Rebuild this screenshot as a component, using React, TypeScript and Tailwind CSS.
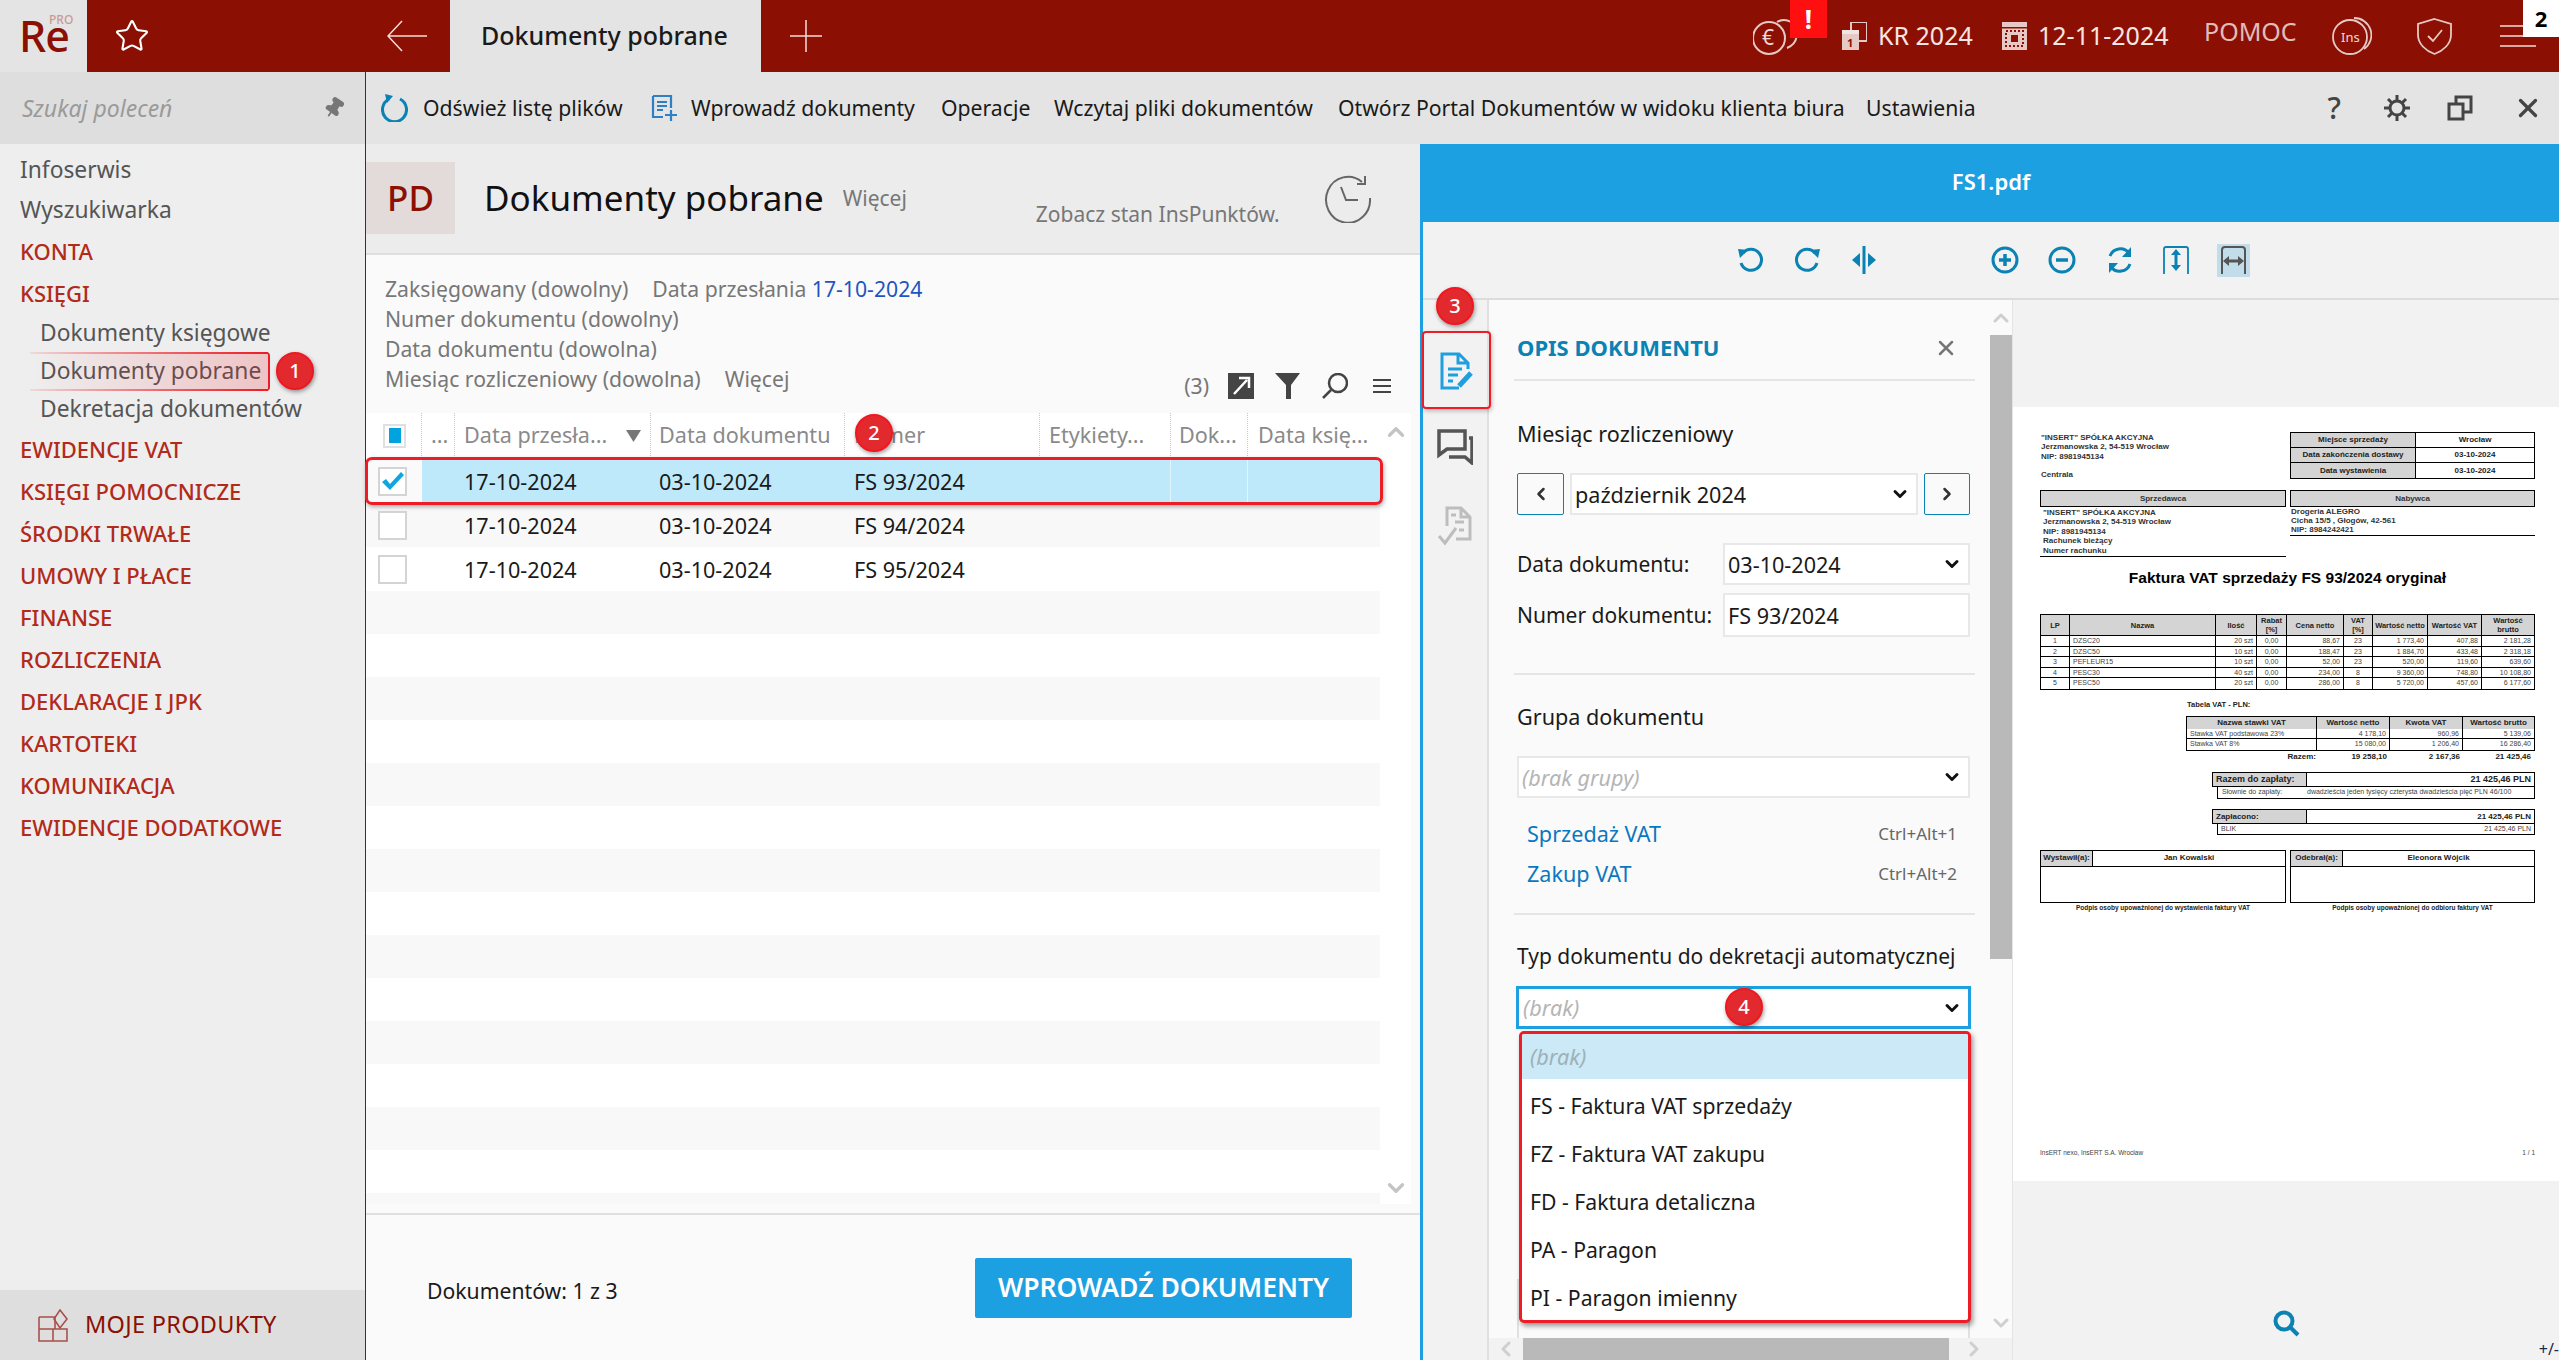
import { ChevronDown, ChevronLeft, ChevronRight, ChevronUp, Star, X, Pin } from "lucide-react";

const sections = ["EWIDENCJE VAT", "KSIĘGI POMOCNICZE", "ŚRODKI TRWAŁE", "UMOWY I PŁACE", "FINANSE", "ROZLICZENIA", "DEKLARACJE I JPK", "KARTOTEKI", "KOMUNIKACJA", "EWIDENCJE DODATKOWE"];

const docs = [
  { date: "17-10-2024", docDate: "03-10-2024", num: "FS 93/2024" },
  { date: "17-10-2024", docDate: "03-10-2024", num: "FS 94/2024" },
  { date: "17-10-2024", docDate: "03-10-2024", num: "FS 95/2024" },
];

const invoiceRows = [
  ["1", "DZSC20", "20 szt", "0,00", "88,67", "23", "1 773,40", "407,88", "2 181,28"],
  ["2", "DZSC50", "10 szt", "0,00", "188,47", "23", "1 884,70", "433,48", "2 318,18"],
  ["3", "PEFLEUR15", "10 szt", "0,00", "52,00", "23", "520,00", "119,60", "639,60"],
  ["4", "PESC30", "40 szt", "0,00", "234,00", "8", "9 360,00", "748,80", "10 108,80"],
  ["5", "PESC50", "20 szt", "0,00", "286,00", "8", "5 720,00", "457,60", "6 177,60"],
];

const options = ["FS - Faktura VAT sprzedaży", "FZ - Faktura VAT zakupu", "FD - Faktura detaliczna", "PA - Paragon", "PI - Paragon imienny"];

const gridCols = "grid grid-cols-[56px_33px_196px_194px_195px_131px_77px_132px]";
const itemCols = "grid grid-cols-[29px_146px_41px_30px_57px_29px_55px_54px_52px]";
const vatCols = "grid grid-cols-[130px_73px_73px_71px]";

function Badge({ n, className }: { n: number; className: string }) {
  return (
    <div className={`absolute w-[38px] h-[38px] rounded-full bg-[#e2292e] border-2 border-[#f01820] text-white text-[20px] font-medium flex items-center justify-center shadow-[1px_2px_4px_rgba(0,0,0,0.4)] ${className}`}>
      {n}
    </div>
  );
}

function Select({ children, className }: { children: React.ReactNode; className: string }) {
  return (
    <div className={`flex items-center justify-between bg-white border-2 border-[#e8e8e8] pl-[3px] pr-[6px] ${className}`}>
      <span className="pt-[2px]">{children}</span>
      <ChevronDown size={20} strokeWidth={3.5} className="text-[#111]" />
    </div>
  );
}

function Checkbox({ checked }: { checked?: boolean }) {
  return (
    <div className="w-[29px] h-[29px] bg-white border-2 border-[#d4d4d4] flex items-center justify-center">
      {checked && (
        <svg width="24" height="20" viewBox="0 0 24 20">
          <path d="M1 11 L5 8 L9 13 L20 1 L23 4 L9 19 Z" fill="#0ea5e0" />
        </svg>
      )}
    </div>
  );
}

function Blue({ children }: { children: React.ReactNode }) {
  return (
    <svg width="28" height="28" viewBox="0 0 28 28" fill="none" stroke="#0a82b4" strokeWidth="3">
      {children}
    </svg>
  );
}

function Invoice() {
  const gray = "bg-[#d4d4d4] flex items-center justify-center font-bold";
  return (
    <div className="bg-white w-[546px] h-[774px] pt-[25px] pl-[27px] pr-[24px] text-[8px] text-[#222] font-['Liberation_Sans',Arial,sans-serif] shrink-0">
      <div className="flex justify-between h-[47px]">
        <div className="leading-[9.3px] pt-[1px] pl-[1px] font-bold text-[#333]">
          <div>"INSERT" SPÓŁKA AKCYJNA</div>
          <div>Jerzmanowska 2, 54-519 Wrocław</div>
          <div>NIP: 8981945134</div>
          <div className="mt-[9px]">Centrala</div>
        </div>
        <div className="w-[245px] border border-black grid grid-cols-[125px_118px] grid-rows-3 font-bold">
          <div className={`${gray} border-r border-b border-black`}>Miejsce sprzedaży</div>
          <div className="flex items-center justify-center border-b border-black">Wrocław</div>
          <div className={`${gray} border-r border-b border-black`}>Data zakończenia dostawy</div>
          <div className="flex items-center justify-center border-b border-black">03-10-2024</div>
          <div className={`${gray} border-r border-black`}>Data wystawienia</div>
          <div className="flex items-center justify-center">03-10-2024</div>
        </div>
      </div>

      <div className="flex justify-between items-start mt-[11px] h-[67px] font-bold text-[#333]">
        <div className="w-[246px] h-[67px] border-b border-black">
          <div className={`${gray} h-[17px] border border-black`}>Sprzedawca</div>
          <div className="pl-[3px] pt-[1px] leading-[9.4px]">
            <div>"INSERT" SPÓŁKA AKCYJNA</div>
            <div>Jerzmanowska 2, 54-519 Wrocław</div>
            <div>NIP: 8981945134</div>
            <div>Rachunek bieżący</div>
            <div>Numer rachunku</div>
          </div>
        </div>
        <div className="w-[245px] h-[46px] border-b border-black">
          <div className={`${gray} h-[17px] border border-black`}>Nabywca</div>
          <div className="pl-[1px] leading-[9.2px]">
            <div>Drogeria ALEGRO</div>
            <div>Cicha 15/5 , Głogów, 42-561</div>
            <div>NIP: 8984242421</div>
          </div>
        </div>
      </div>

      <div className="mt-[11px] h-[20px] text-center text-[15.5px] leading-[20px] font-bold text-black whitespace-nowrap">Faktura VAT sprzedaży FS 93/2024 oryginał</div>

      <div className="mt-[26px] border border-black">
        <div className={`${itemCols} h-[21px] border-b border-black font-bold leading-[9px] text-center`}>
          {["LP", "Nazwa", "Ilość", "Rabat [%]", "Cena netto", "VAT [%]", "Wartość netto", "Wartość VAT", "Wartość brutto"].map((h, i) => (
            <div key={h} className={`${gray} ${i < 8 ? "border-r border-black" : ""} text-[7.5px] px-[1px]`}>{h}</div>
          ))}
        </div>
        {invoiceRows.map((row, r) => (
          <div key={row[0]} className={`${itemCols} h-[10.6px] text-[7px] leading-[10px] text-[#444] ${r < 4 ? "border-b border-black" : ""}`}>
            {row.map((c, i) => (
              <div key={i} className={`px-[3px] whitespace-nowrap overflow-hidden ${i < 8 ? "border-r border-black" : ""} ${i === 0 || i === 3 || i === 5 ? "text-center" : i === 1 ? "text-left" : "text-right"}`}>{c}</div>
            ))}
          </div>
        ))}
      </div>

      <div className="mt-[10px] ml-[147px] h-[10px] leading-[10px] font-bold text-[7.5px]">Tabela VAT - PLN:</div>
      <div className="mt-[6px] ml-[146px] border border-black">
        <div className={`${vatCols} h-[12px] border-b border-black`}>
          {["Nazwa stawki VAT", "Wartość netto", "Kwota VAT", "Wartość brutto"].map((h, i) => (
            <div key={h} className={`${gray} ${i < 3 ? "border-r border-black" : ""}`}>{h}</div>
          ))}
        </div>
        {[["Stawka VAT podstawowa 23%", "4 178,10", "960,96", "5 139,06"], ["Stawka VAT 8%", "15 080,00", "1 206,40", "16 286,40"]].map((row, r) => (
          <div key={row[0]} className={`${vatCols} h-[10.5px] text-[7px] leading-[10px] text-[#444] ${r === 0 ? "border-b border-black" : ""}`}>
            {row.map((c, i) => (
              <div key={i} className={`px-[3px] whitespace-nowrap ${i < 3 ? "border-r border-black" : ""} ${i > 0 ? "text-right" : ""}`}>{c}</div>
            ))}
          </div>
        ))}
      </div>
      <div className={`${vatCols} ml-[147px] h-[10px] leading-[12px] font-bold text-right`}>
        <div className="pr-[1px]">Razem:</div>
        <div className="pr-[3px]">19 258,10</div>
        <div className="pr-[3px]">2 167,36</div>
        <div className="pr-[3px]">21 425,46</div>
      </div>

      <div className="mt-[11px] ml-[172px]">
        <div className="h-[15px] border border-black flex text-[9px] font-bold">
          <div className="bg-[#d4d4d4] w-[94px] border-r border-black pl-[3px] leading-[13px]">Razem do zapłaty:</div>
          <div className="flex-1 text-right pr-[3px] leading-[13px]">21 425,46 PLN</div>
        </div>
        <div className="ml-[5px] h-[12px] border border-t-0 border-black flex text-[7px] leading-[10px] text-[#444] px-[4px]">
          <div className="w-[85px]">Słownie do zapłaty:</div>
          <div>dwadzieścia jeden tysięcy czterysta dwadzieścia pięć PLN 46/100</div>
        </div>
      </div>

      <div className="mt-[10px] ml-[172px]">
        <div className="h-[15px] border border-black flex text-[8px] font-bold">
          <div className="bg-[#d4d4d4] w-[94px] border-r border-black pl-[3px] leading-[13px]">Zapłacono:</div>
          <div className="flex-1 text-right pr-[3px] leading-[13px]">21 425,46 PLN</div>
        </div>
        <div className="ml-[5px] h-[11px] border border-t-0 border-black flex justify-between text-[7px] leading-[10px] text-[#444] px-[3px]">
          <div>BLIK</div>
          <div>21 425,46 PLN</div>
        </div>
      </div>

      <div className="mt-[15px] flex justify-between">
        {[["Wystawił(a):", "Jan Kowalski", "Podpis osoby upoważnionej do wystawienia faktury VAT", "w-[246px]"], ["Odebrał(a):", "Eleonora Wójcik", "Podpis osoby upoważnionej do odbioru faktury VAT", "w-[245px]"]].map((s) => (
          <div key={s[0]} className={s[3]}>
            <div className="h-[53px] border border-black font-bold">
              <div className="h-[16px] flex border-b border-black">
                <div className="w-[52px] bg-[#d4d4d4] border-r border-black flex items-center justify-center">{s[0]}</div>
                <div className="flex-1 flex items-center justify-center">{s[1]}</div>
              </div>
            </div>
            <div className="text-center text-[6.5px] font-bold leading-[9px]">{s[2]}</div>
          </div>
        ))}
      </div>

      <div className="mt-[236px] flex justify-between text-[6.5px] leading-[10px] text-[#444]">
        <div>InsERT nexo, InsERT S.A. Wrocław</div>
        <div>1 / 1</div>
      </div>
    </div>
  );
}

export default function App() {
  return (
    <div className="relative w-[2559px] h-[1360px] overflow-hidden flex flex-col bg-[#fafafa] text-[21.6px] text-[#1a1a1a] font-['Noto_Sans','Open_Sans',sans-serif]">
      {/* top bar */}
      <header className="h-[72px] flex bg-[#8b1003] shrink-0 text-white">
        <div className="relative w-[87px] bg-[#e4e4e4]">
          <span className="absolute left-[19px] top-[8px] text-[43px] leading-[56px] font-medium text-[#8b1003] tracking-[-1px]">Re</span>
          <span className="absolute left-[49px] top-[13px] text-[12px] leading-[14px] font-medium text-[#c99a95]">PRO</span>
        </div>
        <div className="w-[363px] flex items-center justify-between pl-[27px] pr-[23px]">
          <Star size={36} strokeWidth={1.4} />
          <svg width="40" height="32" viewBox="0 0 40 32" fill="none" stroke="#f3dcd8" strokeWidth="1.5"><path d="M15 1 L1 16 L15 31 M1 16 H40" /></svg>
        </div>
        <div className="w-[311px] bg-[#e4e4e4] flex items-center pl-[31px] text-[25px] font-medium text-[#1a1a1a] whitespace-nowrap">Dokumenty pobrane</div>
        <div className="ml-[29px] flex items-center">
          <svg width="32" height="32" viewBox="0 0 32 32" stroke="#f3dcd8" strokeWidth="1.5"><path d="M16 0 V32 M0 16 H32" /></svg>
        </div>
        <div className="flex-1" />
        <div className="flex items-center pr-[23px] text-[#f6e6e3]">
          <div className="relative w-[52px] h-[72px]">
            <svg width="52" height="42" viewBox="0 0 52 42" fill="none" stroke="#e6c9c5" strokeWidth="2" className="absolute top-[14px] left-0">
              <circle cx="16" cy="24" r="16" />
              <path d="M24 8 A14 14 0 0 1 38 8 A15 15 0 0 1 34 34" />
              <text x="9" y="31" fontSize="21" fill="#f0dad7" stroke="none">€</text>
            </svg>
            <div className="absolute left-[37px] top-0 w-[37px] h-[38px] bg-[#ff0f0f] flex items-center justify-center text-white text-[26px] font-bold">!</div>
          </div>
          <svg width="25" height="28" viewBox="0 0 25 28" className="ml-[37px]">
            <rect x="9" y="0" width="16" height="19" fill="none" stroke="#e6c9c5" strokeWidth="2" />
            <rect x="0" y="8" width="17" height="20" fill="#e6c9c5" />
            <rect x="0" y="8" width="17" height="4" fill="#f3e4e2" />
            <text x="5" y="25" fontSize="11" fontWeight="700" fill="#8b1003">1</text>
          </svg>
          <span className="ml-[11px] w-[94px] whitespace-nowrap text-[25px]">KR 2024</span>
          <svg width="25" height="28" viewBox="0 0 25 28" className="ml-[30px]">
            <rect width="25" height="28" fill="#e6c9c5" />
            <rect x="0" y="5" width="25" height="1.5" fill="#8b1003" />
            <rect x="4" y="9" width="17" height="15" fill="none" stroke="#8b1003" strokeDasharray="2 2" strokeWidth="2" />
            <rect x="9" y="13" width="7" height="7" fill="#8b1003" />
          </svg>
          <span className="ml-[11px] w-[133px] whitespace-nowrap text-[25px]">12-11-2024</span>
          <span className="ml-[33px] w-[93px] whitespace-nowrap text-[25px] text-[#e0bdb8] -mt-[8px]">POMOC</span>
          <svg width="40" height="40" viewBox="0 0 40 40" fill="none" stroke="#e6c9c5" strokeWidth="1.8" className="ml-[35px]">
            <circle cx="18" cy="21" r="17" />
            <path d="M22 2 A17 17 0 0 1 32 33" />
            <text x="9" y="26" fontSize="13" fill="#f0dad7" stroke="none">Ins</text>
          </svg>
          <svg width="35" height="37" viewBox="0 0 35 37" fill="none" stroke="#e6c9c5" strokeWidth="1.8" className="ml-[45px]">
            <path d="M17.5 1 L34 6 V17 C34 26 26 33 17.5 36 C9 33 1 26 1 17 V6 Z" />
            <path d="M11 18 L16 23 L25 12" />
          </svg>
          <div className="ml-[48px] w-[36px] flex flex-col gap-[8px]">
            <div className="h-[2px] bg-[#d8a8a2]" />
            <div className="h-[2px] bg-[#d8a8a2]" />
            <div className="h-[2px] bg-[#d8a8a2]" />
          </div>
        </div>
      </header>

      <div className="flex flex-1 min-h-0">
        {/* sidebar */}
        <aside className="w-[366px] shrink-0 flex flex-col bg-[#eeeeee] border-r border-[#8b1003]">
          <div className="h-[72px] shrink-0 bg-[#dedede] flex items-center justify-between pl-[22px] pr-[20px]">
            <span className="italic text-[23px] text-[#9a9a9a]">Szukaj poleceń</span>
            <Pin size={22} className="text-[#777] fill-[#777] rotate-[35deg]" />
          </div>
          <nav className="flex-1 pt-[6px] pl-[20px] text-[22.8px] text-[#555]">
            <div className="h-[40px] flex items-center">Infoserwis</div>
            <div className="h-[40px] flex items-center">Wyszukiwarka</div>
            <div className="h-[42px] flex items-center text-[#b22a1a] font-medium text-[22px]">KONTA</div>
            <div className="h-[42px] flex items-center text-[#b22a1a] font-medium text-[22px]">KSIĘGI</div>
            <div className="pl-[20px]">
              <div className="h-[38px] flex items-center">Dokumenty księgowe</div>
              <div className="h-[38px] flex items-center">Dokumenty pobrane</div>
              <div className="h-[38px] flex items-center">Dekretacja dokumentów</div>
            </div>
            {sections.map((s) => (
              <div key={s} className="h-[42px] flex items-center text-[#b22a1a] font-medium text-[22px]">{s}</div>
            ))}
          </nav>
          <div className="h-[70px] bg-[#dedede] flex items-center pl-[38px] gap-[17px] text-[#8b1003] text-[23.5px] tracking-[0.3px]">
            <svg width="30" height="33" viewBox="0 0 30 33" fill="none" stroke="#a9504a" strokeWidth="1.6">
              <path d="M1 8 H17 M1 8 V32 H29 V20 H1 M15 20 V32 M17 8 V20" />
              <path d="M22 1 L29 10 L22 19 L16 10 Z" />
            </svg>
            MOJE PRODUKTY
          </div>
        </aside>

        <div className="flex-1 flex flex-col min-w-0">
          {/* toolbar */}
          <div className="h-[72px] shrink-0 bg-[#e4e4e4] flex items-center pl-[15px] text-[21.2px]">
            <svg width="27" height="28" viewBox="0 0 27 28" fill="none" stroke="#0a82b4" strokeWidth="3">
              <path d="M8 5 A12 12 0 1 0 19 5" />
              <path d="M4 0 L12 2 L6 9 Z" fill="#0a82b4" stroke="none" />
            </svg>
            <span className="ml-[15px] w-[200px] whitespace-nowrap">Odśwież listę plików</span>
            <svg width="27" height="28" viewBox="0 0 27 28" fill="none" stroke="#2f7fc4" strokeWidth="2.2" className="ml-[27px]">
              <path d="M3 2 H21 V14 M13 23 H3 V2 M7 8 H17 M7 12 H17 M7 16 H13 M21 16 V27 M15 21 H27" />
            </svg>
            <span className="ml-[14px] w-[227px] whitespace-nowrap">Wprowadź dokumenty</span>
            <span className="ml-[23px] w-[90px] whitespace-nowrap">Operacje</span>
            <span className="ml-[23px] w-[261px] whitespace-nowrap">Wczytaj pliki dokumentów</span>
            <span className="ml-[23px] w-[504px] whitespace-nowrap">Otwórz Portal Dokumentów w widoku klienta biura</span>
            <span className="ml-[24px] w-[105px] whitespace-nowrap">Ustawienia</span>
            <div className="flex-1" />
            <div className="flex items-center pr-[16px] text-[#444]">
              <span className="text-[30px] font-medium leading-none">?</span>
              <svg width="28" height="28" viewBox="0 0 28 28" fill="none" stroke="#444" strokeWidth="3" className="ml-[42px]">
                <circle cx="14" cy="14" r="7" />
                <path d="M14 1 V6 M14 22 V27 M1 14 H6 M22 14 H27 M5 5 L9 9 M19 19 L23 23 M23 5 L19 9 M9 19 L5 23" />
              </svg>
              <svg width="26" height="26" viewBox="0 0 26 26" fill="none" stroke="#444" strokeWidth="3" className="ml-[36px]">
                <rect x="2" y="9" width="14" height="15" />
                <path d="M9 9 V2 H24 V17 H16" />
              </svg>
              <X size={30} strokeWidth={2.6} className="ml-[40px]" />
            </div>
          </div>

          <div className="flex flex-1 min-h-0">
            {/* document list */}
            <section className="w-[1054px] shrink-0 flex flex-col">
              <div className="h-[111px] shrink-0 bg-[#ececec] border-b-2 border-[#dedede] flex pt-[18px]">
                <div className="w-[89px] h-[72px] bg-[#e3dada] flex items-center justify-center text-[#8b1003] text-[35px] font-medium">PD</div>
                <div className="ml-[29px] h-[72px] flex items-center text-[35px] text-[#111] whitespace-nowrap">Dokumenty pobrane</div>
                <div className="ml-[19px] h-[72px] flex items-center text-[#777] text-[21px] pt-[2px]">Więcej</div>
                <div className="ml-[129px] h-[72px] flex items-end text-[#777] text-[21px] pb-[4px] whitespace-nowrap">Zobacz stan InsPunktów.</div>
                <svg width="48" height="50" viewBox="0 0 48 50" fill="none" stroke="#666" strokeWidth="2" className="ml-[44px] mt-[11px]">
                  <path d="M38 9 A22 23 0 1 0 46 25" />
                  <path d="M41 3 V11 H33" />
                  <path d="M17 14 L22 27 L34 27" />
                </svg>
              </div>

              <div className="h-[158px] shrink-0 pt-[19px] pl-[19px] text-[#777] text-[21.2px] leading-[30px]">
                <div className="whitespace-nowrap">Zaksięgowany (dowolny)<span className="ml-[24px]">Data przesłania</span> <span className="text-[#1f55c0]">17-10-2024</span></div>
                <div>Numer dokumentu (dowolny)</div>
                <div>Data dokumentu (dowolna)</div>
                <div className="flex items-start">
                  <span>Miesiąc rozliczeniowy (dowolna)</span>
                  <span className="ml-[24px]">Więcej</span>
                  <div className="flex-1" />
                  <div className="flex items-center mt-[7px] pr-[29px]">
                    <span>(3)</span>
                    <svg width="26" height="26" viewBox="0 0 26 26" className="ml-[19px]">
                      <rect width="26" height="26" fill="#444" />
                      <path d="M6 21 L19 7 M11 5 H21 V15" fill="none" stroke="#fff" strokeWidth="2.5" />
                    </svg>
                    <svg width="25" height="26" viewBox="0 0 25 26" className="ml-[21px]"><path d="M0 0 H25 L16 12 V26 H11 V12 Z" fill="#444" /></svg>
                    <svg width="26" height="26" viewBox="0 0 26 26" fill="none" stroke="#444" strokeWidth="2.5" className="ml-[22px]">
                      <circle cx="16" cy="10" r="9" />
                      <path d="M9 17 L1 25" />
                    </svg>
                    <div className="ml-[25px] w-[18px] flex flex-col gap-[4px]">
                      <div className="h-[2px] bg-[#444]" />
                      <div className="h-[2px] bg-[#444]" />
                      <div className="h-[2px] bg-[#444]" />
                    </div>
                  </div>
                </div>
              </div>

              <div className="h-[791px] shrink-0 flex w-[1045px] bg-white">
                <div className="w-[1014px] flex flex-col text-[#1a1a1a]">
                  <div className={`${gridCols} h-[46px] shrink-0 text-[#8a8a8a] items-center border-b border-[#eeeeee]`}>
                    <div className="h-full flex items-center pl-[17px] border-r border-dotted border-[#c8c8c8]">
                      <div className="w-[23px] h-[24px] border-2 border-[#e0e0e0] flex items-center justify-center"><div className="w-[12px] h-[15px] bg-[#00a2e0]" /></div>
                    </div>
                    <div className="h-full flex items-center pl-[9px] border-r border-dotted border-[#c8c8c8]">...</div>
                    <div className="h-full flex items-center pl-[9px] justify-between pr-[9px] border-r border-dotted border-[#c8c8c8] whitespace-nowrap">
                      Data przesła...
                      <svg width="15" height="12" viewBox="0 0 15 12"><path d="M0 0 H15 L7.5 12 Z" fill="#777" /></svg>
                    </div>
                    <div className="h-full flex items-center pl-[8px] border-r border-dotted border-[#c8c8c8] whitespace-nowrap">Data dokumentu</div>
                    <div className="h-full flex items-center pl-[9px] border-r border-dotted border-[#c8c8c8]">Numer</div>
                    <div className="h-full flex items-center pl-[9px] border-r border-dotted border-[#c8c8c8]">Etykiety...</div>
                    <div className="h-full flex items-center pl-[8px] border-r border-dotted border-[#c8c8c8]">Dok...</div>
                    <div className="h-full flex items-center pl-[10px] whitespace-nowrap">Data księ...</div>
                  </div>
                  {docs.map((d, i) => (
                    <div key={d.num} className={`${gridCols} h-[44px] shrink-0 items-center ${i === 0 ? "bg-[#bde9fb]" : i === 1 ? "bg-[#f8f8f8]" : "bg-white"}`}>
                      <div className={`h-full flex items-center pl-[12px] ${i === 0 ? "bg-[#fafafa]" : ""}`}><Checkbox checked={i === 0} /></div>
                      <div />
                      <div className="pl-[9px] pt-[3px]">{d.date}</div>
                      <div className="pl-[8px] pt-[3px]">{d.docDate}</div>
                      <div className="pl-[9px] pt-[3px]">{d.num}</div>
                      <div className={`h-full ${i === 0 ? "border-r border-[#e0f5fd]" : ""}`} />
                      <div className={`h-full ${i === 0 ? "border-r border-[#e0f5fd]" : ""}`} />
                      <div />
                    </div>
                  ))}
                  {Array.from({ length: 14 }).map((_, i) => (
                    <div key={i} className={`h-[43px] shrink-0 ${i % 2 === 0 ? "bg-[#f8f8f8]" : "bg-white"}`} />
                  ))}
                  <div className="h-[11px] shrink-0 bg-[#f8f8f8]" />
                </div>
                <div className="flex-1 flex flex-col items-center justify-between pt-[6px] pb-[3px] text-[#c4c4c4]">
                  <ChevronUp size={26} strokeWidth={3} />
                  <ChevronDown size={26} strokeWidth={3} />
                </div>
              </div>

              <div className="flex-1 border-t-2 border-[#e0e0e0] mt-[9px] flex items-center justify-between pl-[61px] pr-[68px]">
                <span className="mt-[6px] text-[21.2px]">Dokumentów: 1 z 3</span>
                <div className="w-[377px] h-[60px] rounded-[2px] bg-[#1ca0e2] text-white text-[26.5px] font-semibold flex items-center justify-center whitespace-nowrap">WPROWADŹ DOKUMENTY</div>
              </div>
            </section>

            {/* preview */}
            <section className="flex-1 flex flex-col border-l-[3px] border-[#1ca0e2] min-w-0">
              <div className="h-[78px] shrink-0 bg-[#1ca0e2] text-white text-[22px] font-semibold flex items-center justify-center pb-[4px]">FS1.pdf</div>
              <div className="h-[78px] shrink-0 bg-[#f2f2f2] border-b-2 border-[#dcdcdc] flex items-center pl-[313px]">
                <Blue><path d="M7 7 A10.5 10.5 0 1 1 5 17" /><path d="M2 3 L12 4 L4 12 Z" fill="#0a82b4" stroke="none" /></Blue>
                <div className="ml-[30px]"><Blue><path d="M21 7 A10.5 10.5 0 1 0 23 17" /><path d="M26 3 L16 4 L24 12 Z" fill="#0a82b4" stroke="none" /></Blue></div>
                <div className="ml-[28px]"><Blue><path d="M14 0 V28" strokeWidth="3" /><path d="M10 7 L2 14 L10 21 Z M18 7 L26 14 L18 21 Z" fill="#0a82b4" stroke="none" /></Blue></div>
                <div className="ml-[113px]"><Blue><circle cx="14" cy="14" r="12" /><path d="M14 8 V20 M8 14 H20" strokeWidth="3.5" /></Blue></div>
                <div className="ml-[29px]"><Blue><circle cx="14" cy="14" r="12" /><path d="M8 14 H20" strokeWidth="3.5" /></Blue></div>
                <div className="ml-[30px]"><Blue><path d="M4 10 A11 11 0 0 1 23 7 M24 18 A11 11 0 0 1 5 21" /><path d="M25 1 V11 H16 Z M3 27 V17 H12 Z" fill="#0a82b4" stroke="none" /></Blue></div>
                <div className="ml-[28px]"><Blue><path d="M2 28 V3 Q2 1 4 1 H24 Q26 1 26 3 V28" strokeWidth="1.8" /><path d="M14 7 V21" strokeWidth="3" /><path d="M9 9 L14 3 L19 9 Z M9 19 L14 25 L19 19 Z" fill="#0a82b4" stroke="none" /></Blue></div>
                <div className="ml-[27px] w-[33px] h-[33px] bg-[#c2dde9] flex items-center justify-center">
                  <svg width="27" height="28" viewBox="0 0 27 28" fill="none" stroke="#555" strokeWidth="2"><path d="M2 28 V4 Q2 1 5 1 H22 Q25 1 25 4 V28" /><path d="M8 15 H20" strokeWidth="3" /><path d="M9 10 L3 15 L9 20 Z M18 10 L24 15 L18 20 Z" fill="#555" stroke="none" /></svg>
                </div>
              </div>

              <div className="flex flex-1 min-h-0">
                <div className="w-[66px] shrink-0 bg-[#f2f2f2] border-r-2 border-[#e0e0e0] flex flex-col items-center">
                  <svg width="34" height="38" viewBox="0 0 34 38" fill="none" stroke="#1f9fe0" strokeWidth="3" className="mt-[52px] ml-[3px]">
                    <path d="M19 36 H2 V2 H19 L28 11 V17 M18 2 V11 H28" />
                    <path d="M8 17 H22 M8 23 H18 M8 29 H13" />
                    <path d="M19 34 L31 21" strokeWidth="5" />
                  </svg>
                  <svg width="36" height="36" viewBox="0 0 36 36" fill="none" stroke="#555" strokeWidth="3.5" className="mt-[39px]">
                    <path d="M2 2 H28 V20 H10 L2 26 Z" />
                    <path d="M32 9 H35 V34 L28 28 H12" />
                  </svg>
                  <svg width="36" height="40" viewBox="0 0 36 40" fill="none" stroke="#bdbdbd" strokeWidth="3" className="mt-[41px]">
                    <path d="M10 20 V2 H24 L33 11 V33 H19 M24 2 V11 H33" />
                    <path d="M14 9 H19 M18 16 H27 M22 24 H27" />
                    <path d="M2 30 L8 37 L19 22" />
                  </svg>
                </div>

                <div className="w-[523px] shrink-0 flex flex-col">
                  <div className="flex-1 flex min-h-0">
                    <div className="w-[501px] pl-[25px] text-[#1a1a1a] overflow-hidden">
                      <div className="w-[461px] h-[81px] border-b-2 border-[#e5e5e5] pt-[16px] pl-[3px] pr-[17px] flex items-center justify-between">
                        <span className="text-[#0a82b4] font-bold text-[22px] whitespace-nowrap">OPIS DOKUMENTU</span>
                        <X size={24} strokeWidth={2.5} className="text-[#777]" />
                      </div>
                      <div className="w-[461px] h-[294px] border-b-2 border-[#e5e5e5] pt-[38px] pl-[3px] pr-[5px]">
                        <div className="h-[30px] flex items-center">Miesiąc rozliczeniowy</div>
                        <div className="mt-[24px] h-[42px] flex gap-[6px]">
                          <div className="w-[47px] border border-[#0a82b4] rounded-[2px] flex items-center justify-center"><ChevronLeft size={20} strokeWidth={3} className="text-[#333]" /></div>
                          <Select className="flex-1">październik 2024</Select>
                          <div className="w-[46px] border border-[#0a82b4] rounded-[2px] flex items-center justify-center"><ChevronRight size={20} strokeWidth={3} className="text-[#333]" /></div>
                        </div>
                        <div className="mt-[28px] h-[42px] flex items-center justify-between">
                          <span className="text-[21px] pt-[2px]">Data dokumentu:</span>
                          <Select className="w-[247px] h-[42px]">03-10-2024</Select>
                        </div>
                        <div className="mt-[8px] h-[44px] flex items-center justify-between">
                          <span className="text-[21px] pt-[2px]">Numer dokumentu:</span>
                          <div className="w-[247px] h-[44px] bg-white border-2 border-[#e8e8e8] pl-[3px] pt-[2px] flex items-center">FS 93/2024</div>
                        </div>
                      </div>
                      <div className="w-[461px] h-[240px] border-b-2 border-[#e5e5e5] pt-[27px] pl-[3px] pr-[5px]">
                        <div className="h-[30px] flex items-center">Grupa dokumentu</div>
                        <Select className="mt-[24px] h-[42px] text-[#b5b5b5] italic">(brak grupy)</Select>
                        <div className="mt-[21px] h-[30px] pl-[10px] pr-[13px] flex items-center justify-between text-[#0a78c0]">
                          Sprzedaż VAT
                          <span className="text-[17px] text-[#666]">Ctrl+Alt+1</span>
                        </div>
                        <div className="mt-[10px] h-[30px] pl-[10px] pr-[13px] flex items-center justify-between text-[#0a78c0]">
                          Zakup VAT
                          <span className="text-[17px] text-[#666]">Ctrl+Alt+2</span>
                        </div>
                      </div>
                      <div className="w-[461px] pt-[27px] pl-[3px] pr-[5px]">
                        <div className="h-[30px] flex items-center whitespace-nowrap text-[21px]">Typ dokumentu do dekretacji automatycznej</div>
                        <div className="mt-[14px] h-[43px] -mx-[1px] bg-white border-[3px] border-[#1ca0e2] pl-[4px] pr-[6px] flex items-center justify-between text-[#b5b5b5] italic">
                          <span className="pt-[2px]">(brak)</span>
                          <ChevronDown size={20} strokeWidth={3.5} className="text-[#111]" />
                        </div>
                        <div className="mt-[250px] h-[60px] border-x-2 border-[#e0e0e0]" />
                      </div>
                    </div>
                    <div className="w-[22px] flex flex-col items-center bg-[#fafafa] relative">
                      <div className="h-[35px] flex items-center"><ChevronUp size={24} strokeWidth={3} className="text-[#cfcfcf]" /></div>
                      <div className="w-full h-[624px] bg-[#b9b9b9]" />
                      <div className="flex-1" />
                      <div className="h-[30px] flex items-center"><ChevronDown size={24} strokeWidth={3} className="text-[#cfcfcf]" /></div>
                    </div>
                  </div>
                  <div className="h-[22px] shrink-0 flex items-center bg-[#f2f2f2]">
                    <ChevronLeft size={24} strokeWidth={3} className="text-[#cfcfcf] ml-[5px]" />
                    <div className="ml-[5px] w-[426px] h-full bg-[#b9b9b9]" />
                    <ChevronRight size={24} strokeWidth={3} className="text-[#cfcfcf] ml-[13px]" />
                  </div>
                </div>

                <div className="flex-1 bg-[#f2f2f2] border-l border-[#e4e4e4] flex flex-col items-center pt-[107px] min-w-0">
                  <Invoice />
                  <svg width="27" height="27" viewBox="0 0 27 27" fill="none" stroke="#0a82b4" strokeWidth="4" className="mt-[129px]">
                    <circle cx="11" cy="11" r="8.5" />
                    <path d="M17 17 L25 25" />
                  </svg>
                  <span className="self-end mt-[2px] text-[16px] leading-[20px] text-[#1a2a4a] whitespace-nowrap">+/-</span>
                </div>
              </div>
            </section>
          </div>
        </div>
      </div>

      {/* callouts */}
      <div className="absolute left-[30px] top-[352px] w-[240px] h-[39px] rounded-r-[4px] border-r-2 border-[#ee1c25] bg-linear-to-r from-transparent to-[#ee1c25]/20">
        <div className="absolute left-0 right-0 top-0 h-[2px] bg-linear-to-r from-[#ee1c25]/10 to-[#ee1c25]" />
        <div className="absolute left-0 right-0 bottom-0 h-[2px] bg-linear-to-r from-[#ee1c25]/10 to-[#ee1c25]" />
      </div>
      <div className="absolute left-[365px] top-[457px] w-[1018px] h-[48px] rounded-[7px] border-[3px] border-[#ee1c25] shadow-[1px_2px_4px_rgba(0,0,0,0.3)]" />
      <div className="absolute left-[1422px] top-[331px] w-[69px] h-[78px] rounded-[4px] border-2 border-[#ee1c25] shadow-[1px_2px_4px_rgba(0,0,0,0.25)]" />
      <div className="absolute left-[1519px] top-[1031px] w-[452px] h-[292px] overflow-hidden rounded-[5px] border-[3px] border-[#ee1c25] bg-white shadow-[2px_3px_5px_rgba(0,0,0,0.4)]">
        <div className="h-[45px] bg-[#cbe9f6] pl-[8px] pt-[2px] flex items-center italic text-[#9fb0b8]">(brak)</div>
        <div className="pt-[3px] text-[21.2px]">
          {options.map((o) => (
            <div key={o} className="h-[48px] pl-[8px] flex items-center whitespace-nowrap">{o}</div>
          ))}
        </div>
      </div>
      <div className="absolute right-0 top-0 w-[36px] h-[37px] bg-white text-black text-[22px] font-bold flex items-center justify-center">2</div>
      <Badge n={1} className="left-[276px] top-[352px]" />
      <Badge n={2} className="left-[855px] top-[414px]" />
      <Badge n={3} className="left-[1436px] top-[287px]" />
      <Badge n={4} className="left-[1725px] top-[988px]" />
    </div>
  );
}
